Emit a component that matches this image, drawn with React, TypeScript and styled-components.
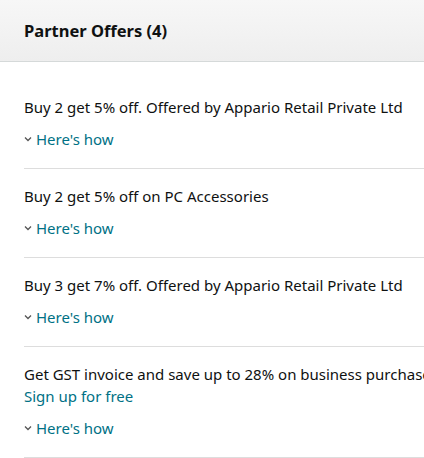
import React from "react";
import styled, { createGlobalStyle } from "styled-components";

const Global = createGlobalStyle`
  html, body { margin: 0; padding: 0; background: #fff; overflow: hidden; }
  body { font-family: "Noto Sans", Arial, sans-serif; color: #0f1111; }
`;

const Panel = styled.div`
  width: 600px;
`;

const Header = styled.div`
  height: 61px;
  background: linear-gradient(to bottom, #f7f7f7, #eeeeee);
  border-bottom: 1px solid #d5d9d9;
  display: flex;
  align-items: center;
  padding-left: 24px;
`;

const Title = styled.h2`
  margin: 0;
  font-size: 16.5px;
  font-weight: 700;
  line-height: 20px;
  color: #0f1111;
`;

const List = styled.div`
  padding-left: 24px;
  padding-top: 35px;
`;

const Offer = styled.div`
  display: flex;
  flex-direction: column;
  border-bottom: 1px solid #dddddd;
  padding-bottom: 19px;
  margin-bottom: 17px;
`;

const OfferText = styled.div`
  font-size: 15px;
  line-height: 20px;
  white-space: nowrap;
`;

const Link = styled.a<{ $gap?: number }>`
  color: #007185;
  font-size: 15px;
  line-height: 20px;
  text-decoration: none;
  margin-top: ${(p) => p.$gap ?? 0}px;
`;

const HowRow = styled.div`
  display: flex;
  align-items: center;
  gap: 4px;
  margin-top: 12px;
  height: 20px;
`;

const Chevron = () => (
  <svg width="8" height="6" viewBox="0 0 8 6" aria-hidden="true">
    <path d="M1 1.5 L4 4.5 L7 1.5" fill="none" stroke="#555" strokeWidth="1.3" />
  </svg>
);

const offers = [
  { text: "Buy 2 get 5% off. Offered by Appario Retail Private Ltd" },
  { text: "Buy 2 get 5% off on PC Accessories" },
  { text: "Buy 3 get 7% off. Offered by Appario Retail Private Ltd" },
  { text: "Get GST invoice and save up to 28% on business purchases.", signup: true },
];

export default function App() {
  return (
    <>
      <Global />
      <Panel>
        <Header>
          <Title>Partner Offers (4)</Title>
        </Header>
        <List>
          {offers.map((o, i) => (
            <Offer key={i}>
              <OfferText>{o.text}</OfferText>
              {o.signup && (
                <Link href="#" $gap={2}>
                  Sign up for free
                </Link>
              )}
              <HowRow>
                <Chevron />
                <Link href="#">Here's how</Link>
              </HowRow>
            </Offer>
          ))}
        </List>
      </Panel>
    </>
  );
}
